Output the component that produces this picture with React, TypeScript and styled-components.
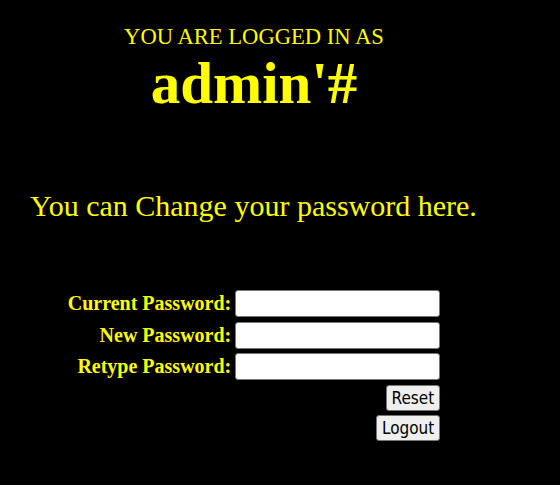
import React from 'react';
import styled, { createGlobalStyle } from 'styled-components';

const GlobalStyle = createGlobalStyle`
  html, body {
    background: #000;
  }
  body {
    margin: 8px;
    font-family: "Liberation Serif", "Times New Roman", serif;
    color: #ffff00;
  }
`

const Wrapper = styled.div`
  width: 492px;
`

const Title = styled.div`
  margin-top: 16px;
  font-size: 22.6px;
  line-height: 26px;
  text-align: center;
`

const UserName = styled.div`
  margin-top: 3px;
  font-size: 59px;
  line-height: 60px;
  font-weight: bold;
  text-align: center;
`

const Message = styled.div`
  margin-top: 76px;
  padding-left: 22px;
  font-size: 30px;
  line-height: 34px;
`

const FormTable = styled.table`
  margin: 64px auto 0;
  border-spacing: 2px;
`

const Label = styled.td`
  padding: 1px;
  font-size: 20px;
  font-weight: bold;
  text-align: right;
  white-space: nowrap;
`

const Field = styled.td<{ $right?: boolean }>`
  padding: 1px 1px 1.5px;
  text-align: ${p => (p.$right ? 'right' : 'left')};
`

const PassInput = styled.input`
  box-sizing: border-box;
  display: block;
  width: 205px;
  height: 27px;
  margin: 0;
  border: 1px solid #767676;
  border-radius: 3px;
  background: #fff;
  font-size: 16px;
`

const Button = styled.button`
  box-sizing: border-box;
  height: 26px;
  margin: 0;
  padding: 0 5px;
  border: 1px solid #767676;
  border-radius: 3px;
  background: #efefef;
  color: #000;
  font-family: "DejaVu Sans Condensed", "DejaVu Sans", sans-serif;
  font-size: 17px;
`

export default class App extends React.Component<{}, {}> {
  render() {
    return (
      <>
        <GlobalStyle />
        <Wrapper>
          <Title>YOU ARE LOGGED IN AS</Title>
          <UserName>admin'#</UserName>
          <Message>You can Change your password here.</Message>
          <FormTable>
            <tbody>
              <tr>
                <Label>Current Password:</Label>
                <Field><PassInput type="password" /></Field>
              </tr>
              <tr>
                <Label>New Password:</Label>
                <Field><PassInput type="password" /></Field>
              </tr>
              <tr>
                <Label>Retype Password:</Label>
                <Field><PassInput type="password" /></Field>
              </tr>
              <tr>
                <td></td>
                <Field $right><Button type="reset">Reset</Button></Field>
              </tr>
              <tr>
                <td></td>
                <Field $right><Button type="button">Logout</Button></Field>
              </tr>
            </tbody>
          </FormTable>
        </Wrapper>
      </>
    )
  }
}
